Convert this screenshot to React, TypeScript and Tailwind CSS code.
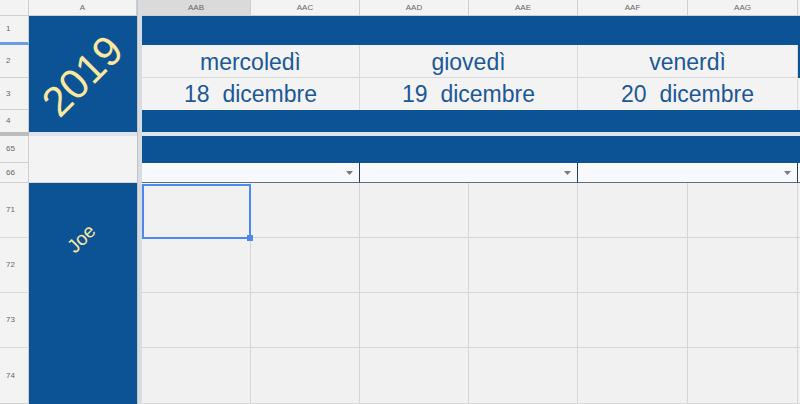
import React from "react";

const hdr =
  "flex items-center justify-center text-[8px] text-[#666] bg-[#f3f3f3] border-r border-b border-[#cfcfcf] row-start-1";
const rowHdr =
  "col-start-1 flex items-center pl-[6px] text-[8px] text-[#666] bg-[#f3f3f3] border-r border-b border-[#cfcfcf]";
const blue = "bg-[#0b5394]";
const txt = "text-[23px] text-[#1c5897] whitespace-pre leading-none";

function Arrow() {
  return (
    <svg width="7" height="4" viewBox="0 0 7 4" className="mr-[6px]">
      <polygon points="0,0 7,0 3.5,4" fill="#7a7a7a" />
    </svg>
  );
}

const days = [
  { day: "mercoledì", date: "18  dicembre", col: "col-start-4" },
  { day: "giovedì", date: "19  dicembre", col: "col-start-6" },
  { day: "venerdì", date: "20  dicembre", col: "col-start-8" },
];

const bodyCols = [
  "col-start-4",
  "col-start-5",
  "col-start-6",
  "col-start-7",
  "col-start-8",
  "col-start-9",
];
const bodyRows = ["row-start-9", "row-start-10", "row-start-11", "row-start-12"];

export default function App() {
  return (
    <div
      className="w-[800px] h-[404px] overflow-hidden bg-white grid grid-cols-[29px_108px_5px_109px_109px_109px_109px_110px_110px_2px] grid-rows-[16px_29px_33px_32px_22px_4px_27px_20px_55px_55px_55px_56px]"
      style={{ fontFamily: '"Liberation Sans", Arial, sans-serif' }}
    >
      {/* column headers */}
      <div className={`${hdr} col-start-1`} />
      <div className={`${hdr} col-start-2`}>A</div>
      <div className={`${hdr} col-start-4 !bg-[#dadada]`}>AAB</div>
      <div className={`${hdr} col-start-5`}>AAC</div>
      <div className={`${hdr} col-start-6`}>AAD</div>
      <div className={`${hdr} col-start-7`}>AAE</div>
      <div className={`${hdr} col-start-8`}>AAF</div>
      <div className={`${hdr} col-start-9`}>AAG</div>
      <div className={`${hdr} col-start-10 border-r-0`} />

      {/* frozen column divider */}
      <div className="col-start-3 row-start-1 row-span-12 bg-[#d8dce1] border-l border-[#c4c4c4]" />

      {/* row headers */}
      <div className={`${rowHdr} row-start-2 !border-b-[3px] !border-b-[#6a9bea]`}>1</div>
      <div className={`${rowHdr} row-start-3`}>2</div>
      <div className={`${rowHdr} row-start-4`}>3</div>
      <div className={`${rowHdr} row-start-5 border-b-0`}>4</div>
      <div className="col-start-1 row-start-6 bg-[#bdbdbd]" />
      <div className={`${rowHdr} row-start-7`}>65</div>
      <div className={`${rowHdr} row-start-8`}>66</div>
      <div className={`${rowHdr} row-start-9 border-b-[#d8d8d8]`}>71</div>
      <div className={`${rowHdr} row-start-10 border-b-[#d8d8d8]`}>72</div>
      <div className={`${rowHdr} row-start-11 border-b-[#d8d8d8]`}>73</div>
      <div className={`${rowHdr} row-start-12`}>74</div>

      {/* column A */}
      <div className={`col-start-2 row-start-2 row-span-4 ${blue} flex items-center justify-center overflow-hidden`}>
        <span className="-rotate-45 text-[42px] leading-none text-[#fbe8a0] translate-y-[2px]">2019</span>
      </div>
      <div className="col-start-2 row-start-6 bg-[#dde3ea]" />
      <div className="col-start-2 row-start-7 row-span-2 bg-[#f3f3f3] border-b border-[#d6d6d6]" />
      <div className={`col-start-2 row-start-9 row-span-2 ${blue} flex items-center justify-center overflow-hidden`}>
        <span className="-rotate-45 text-[19px] leading-none text-[#fbe8a0] -translate-x-[2px]">Joe</span>
      </div>
      <div className={`col-start-2 row-start-11 row-span-2 ${blue}`} />

      {/* data: row 1 */}
      <div className={`col-start-4 col-span-7 row-start-2 ${blue}`} />

      {/* row 2 & 3 */}
      {days.map((d) => (
        <React.Fragment key={d.day}>
          <div
            className={`${d.col} col-span-2 row-start-3 bg-[#f3f3f3] border-r border-b border-[#d9d9d9] flex items-center justify-center pt-[3px] ${txt}`}
          >
            {d.day}
          </div>
          <div
            className={`${d.col} col-span-2 row-start-4 bg-[#f3f3f3] border-r border-[#d9d9d9] flex items-center justify-center ${txt}`}
          >
            {d.date}
          </div>
        </React.Fragment>
      ))}
      <div className={`col-start-10 row-start-3 ${blue}`} />
      <div className="col-start-10 row-start-4 bg-[#f3f3f3]" />

      {/* row 4 */}
      <div className={`col-start-4 col-span-7 row-start-5 ${blue}`} />

      {/* divider */}
      <div className="col-start-4 col-span-7 row-start-6 bg-[#dde3ea]" />

      {/* row 65 */}
      <div className={`col-start-4 col-span-7 row-start-7 ${blue}`} />

      {/* row 66 */}
      {days.map((d) => (
        <div
          key={d.day + "dd"}
          className={`${d.col} col-span-2 row-start-8 bg-[#f7f9fc] border-r border-r-[#22405f] border-b border-b-[#5f6f7d] flex items-center justify-end`}
        >
          <Arrow />
        </div>
      ))}
      <div className="col-start-10 row-start-8 bg-[#f7f9fc] border-b border-b-[#5f6f7d]" />

      {/* body cells */}
      {bodyRows.map((r, ri) =>
        bodyCols.map((c, ci) => (
          <div
            key={r + c}
            className={`${r} ${c} bg-[#f1f1f1] border-r border-b border-[#d6d6d6] ${
              ri === 0 && ci === 0 ? "relative" : ""
            }`}
          >
            {ri === 0 && ci === 0 && (
              <div className="absolute top-[1px] left-0 -right-[1px] -bottom-[2px] border-2 border-[#4d88ec] z-10">
                <div className="absolute -right-[4px] -bottom-[4px] w-[6px] h-[6px] bg-[#4d88ec]" />
              </div>
            )}
          </div>
        ))
      )}
      {bodyRows.map((r) => (
        <div key={r + "end"} className={`${r} col-start-10 bg-[#f1f1f1] border-b border-[#d6d6d6]`} />
      ))}
    </div>
  );
}
